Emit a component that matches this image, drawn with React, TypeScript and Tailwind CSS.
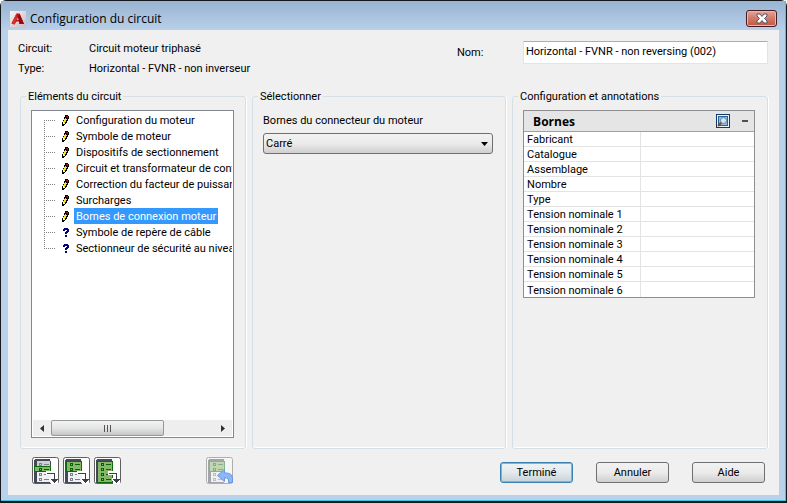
import React from "react";

const outline = "border-[#707070] rounded-[3px] bg-linear-to-b from-[#f2f2f2] from-0% via-[#ebebeb] via-50% to-[#cfcfcf]";

function Logo() {
  return (
    <svg width="16" height="16" viewBox="0 0 16 16" aria-hidden="true">
      <defs>
        <linearGradient id="logoBg" x1="0" y1="0" x2="1" y2="1">
          <stop offset="0" stopColor="#fbf3f3" />
          <stop offset="1" stopColor="#c9b9c0" />
        </linearGradient>
      </defs>
      <rect width="16" height="16" fill="url(#logoBg)" />
      <path d="M1.500 12.500 6.500 2.500H9.500L14 13h-4.500L9 10.500H6.500L4.500 13.500z" fill="#b3161b" />
      <path d="M1.500 12.500 6.500 2.500 7 8 4.500 13.500z" fill="#d3302f" />
      <path d="M8 6 9 9H7z" fill="#e9cfd2" />
      <path d="M9.500 2.500 14 13h-4.500L8 6z" fill="#94090f" />
    </svg>
  );
}

function Pencil() {
  return (
    <svg width="9" height="13" viewBox="0 0 9 13" shapeRendering="crispEdges" aria-hidden="true">
      <path d="M4 1h3v1h1v3H7v2H6v2H5v1H4v1H3v1H1V8h1V6h1V3h1z" fill="#000" />
      <path d="M4 4h1v1h1v1H5v2H4v1H3V8H2V7h1V5h1z" fill="#f2e21c" />
      <path d="M2 8h1v1h1v1H2z" fill="#fff" />
      <path d="M5 2h2v2H6V3H5z" fill="#a01418" />
    </svg>
  );
}

function Question() {
  return (
    <svg width="9" height="13" viewBox="0 0 9 13" shapeRendering="crispEdges" aria-hidden="true">
      <path d="M3 2h4v1h1v3H7v1H6v1H4V6h1V5h1V4H4v1H2V3h1zM4 9h2v2H4z" fill="#000080" />
    </svg>
  );
}

function Branch({ first, last }: { first: boolean; last: boolean }) {
  return (
    <svg className="shrink-0" width="12" height="16" viewBox="0 0 12 16" shapeRendering="crispEdges" aria-hidden="true">
      <path
        d={`M0 8.500h12${first ? "" : "M0.500 0v8"}${last ? "" : "M0.500 8v8"}`}
        fill="none"
        stroke="#808080"
        strokeDasharray="1 1"
      />
    </svg>
  );
}

function Lines({ y, color }: { y: number; color: string }) {
  return (
    <g>
      <rect x="7.500" y={y + 0.5} width="2" height="2" fill="none" stroke={color} />
      <rect x="12" y={y + 1} width="5" height="1" fill={color} />
    </g>
  );
}

function ListIcon({ from, to, undo = false }: { from: number; to: number; undo?: boolean }) {
  const rows = [6, 11, 16, 21];
  return (
    <svg width="27" height="27" viewBox="0 0 27 27" aria-hidden="true">
      <g opacity={undo ? 0.45 : 1}>
        <rect x="0.500" y="0.500" width="26" height="26" rx="2" fill="#fff" stroke="#5f5f5f" />
        <g shapeRendering="crispEdges">
          <rect x="2" y="2" width="17" height="24" fill="#f0f0f4" />
          <rect x="4" y="4" width="14" height="5" fill="#cdd0da" />
          <path d="M3 2h15v2H5v21h13v1H2V3h1z" fill="#454a56" />
          <rect x="18" y="4" width="1" height="12" fill="#454a56" />
          <rect x={from === 9 ? 2.5 : 3.5} y={from + 0.5} width={from === 9 ? 16 : 15} height={to - from - 1} fill="#86b767" stroke="#0b6b0b" />
          {rows.map((y) => (
            <Lines key={y} y={y} color={y >= from && y < to ? "#075f07" : "#7d808a"} />
          ))}
        </g>
      </g>
      {undo ? (
        <path d="M11.500 18.500 18.500 12.500V16H20Q26.500 16 26.500 22V25.500H22.500V23Q22.500 21 20.500 21H18.500V24.500z" fill="#8bb8f5" stroke="#6a97e0" />
      ) : (
        <g shapeRendering="crispEdges">
          <path d="M14 14h10v7h2v6h-7v-3h-1v-3h3v-3h-7z" fill="#fff" />
          <path d="M15 16h8v6h3v1h-1v1h-1v1h-1v1h-1v-1h-1v-1h-1v-1h-1v-1h3v-5h-7z" fill="#3a3f4a" />
        </g>
      )}
    </svg>
  );
}

function Magnifier() {
  return (
    <svg width="14" height="14" viewBox="0 0 14 14" aria-hidden="true">
      <rect x="0.500" y="0.500" width="13" height="13" fill="#e8f3fb" stroke="#123a66" />
      <rect x="2.500" y="2.500" width="9" height="9" fill="#8fb9dc" stroke="#2f6294" />
      <circle cx="7.500" cy="6.500" r="3" fill="#cde5f5" stroke="#5d8bb0" />
      <path d="M5.200 8.800 2 12" stroke="#7a4a20" strokeWidth="2" />
    </svg>
  );
}

const elements = [
  "Configuration du moteur",
  "Symbole de moteur",
  "Dispositifs de sectionnement",
  "Circuit et transformateur de contrôle",
  "Correction du facteur de puissance",
  "Surcharges",
  "Bornes de connexion moteur",
  "Symbole de repère de câble",
  "Sectionneur de sécurité au niveau",
];

const properties = [
  "Fabricant",
  "Catalogue",
  "Assemblage",
  "Nombre",
  "Type",
  "Tension nominale 1",
  "Tension nominale 2",
  "Tension nominale 3",
  "Tension nominale 4",
  "Tension nominale 5",
  "Tension nominale 6",
];

const tools = [
  { label: "Insérer l'élément", from: 9, to: 15 },
  { label: "Insérer jusqu'à l'élément", from: 4, to: 15 },
  { label: "Insérer tous les éléments", from: 4, to: 26 },
];

function Group({ title, className, children }: { title: string; className: string; children: React.ReactNode }) {
  return (
    <fieldset className={`flex min-w-0 flex-col rounded-[3px] border border-[#d5dfe5] pb-[10px] pl-[10px] shadow-[inset_0_-1px_0_#fff,1px_0_0_#fff] ${className}`}>
      <legend className="-ml-[5px] px-[2px] leading-[15px]">{title}</legend>
      {children}
    </fieldset>
  );
}

export default function App() {
  return (
    <div className="flex min-h-screen flex-col rounded-t-md border border-b-2 border-[#15181c] bg-[#b9d1ea] font-[Roboto,'Liberation_Sans',sans-serif] text-[11px] leading-[15px] text-black">
      <div className="flex flex-1 flex-col border-r border-b border-[#3fc6dc] bg-linear-to-b from-[#99b4d1] to-[#b9d1ea] to-[30px] pr-[6px] pb-[5px] pl-[7px]">
        <header className="flex h-[29px] items-center gap-[4px] px-[2px] pt-[6px]">
          <Logo />
          <h1 className="flex-1 font-['Open_Sans','Noto_Sans',sans-serif] text-[12px]">Configuration du circuit</h1>
          <button
            aria-label="Fermer"
            className="flex h-[17px] w-[31px] items-center justify-center rounded-[3px] border border-[#451a24] bg-linear-to-b from-[#e3a596] via-[#d07e6c] via-45% to-[#c35540] shadow-[inset_0_0_0_1px_#e9b9ad]"
          >
            <svg width="12" height="11" viewBox="0 0 12 11" aria-hidden="true">
              <path d="M1 1h3l2 2.500L8 1h3v2L8.500 5.500 11 8v2H8L6 7.500 4 10H1V8l2.500-2.500L1 3z" fill="#fff" stroke="#535666" />
            </svg>
          </button>
        </header>

        <main className="flex flex-1 flex-col bg-[#f0f0f0] pr-[11px] pl-[12px]">
          <div className="flex h-[59px] justify-between pt-[8px]">
            <dl className="-ml-[2px] grid grid-cols-[71px_auto] content-start gap-y-[5px] pt-[3px]">
              <dt>Circuit:</dt>
              <dd>Circuit moteur triphasé</dd>
              <dt>Type:</dt>
              <dd>Horizontal - FVNR - non inverseur</dd>
            </dl>
            <div className="flex items-start">
              <label htmlFor="name" className="w-[66px] pt-[7px]">Nom:</label>
              <input
                id="name"
                defaultValue="Horizontal - FVNR - non reversing (002)"
                className="mt-[3px] h-[23px] w-[245px] border border-[#e2e3ea] border-t-[#abadb3] bg-white px-[2px] pb-[3px]"
              />
            </div>
          </div>

          <div className="flex flex-1 gap-[6px]">
            <Group title="Eléments du circuit" className="w-[226px] pr-[11px]">
              <div className="mt-[6px] flex min-h-[328px] flex-1 flex-col border border-[#828790] bg-white p-px">
                <ul className="flex-1 overflow-hidden">
                  {elements.map((name, i) => (
                    <li key={name} className="flex h-[16px] items-center pl-[11px] whitespace-nowrap">
                      <Branch first={i === 0} last={i === elements.length - 1} />
                      <span className="mr-[4px] ml-[5px] shrink-0">{i < 7 ? <Pencil /> : <Question />}</span>
                      <button className={`h-[16px] px-[2px] ${i === 6 ? "bg-[#3399ff] text-white" : ""}`}>{name}</button>
                    </li>
                  ))}
                </ul>
                <div className="flex h-[16px] items-stretch bg-[#eeeeee]">
                  <button aria-label="Défiler à gauche" className="flex w-[18px] items-center justify-center">
                    <svg width="4" height="7" viewBox="0 0 4 7" aria-hidden="true"><path d="M4 0v7L0 3.500z" fill="#303030" /></svg>
                  </button>
                  <div className="flex w-[113px] items-center justify-center gap-[2px] rounded-[2px] border border-[#979797] bg-linear-to-b from-[#f3f3f3] via-[#e4e5e6] via-50% to-[#c6c7c9]">
                    <span className="h-[7px] w-px bg-[#555]" />
                    <span className="h-[7px] w-px bg-[#555]" />
                    <span className="h-[7px] w-px bg-[#555]" />
                  </div>
                  <div className="flex-1" />
                  <button aria-label="Défiler à droite" className="flex w-[18px] items-center justify-center">
                    <svg width="4" height="7" viewBox="0 0 4 7" aria-hidden="true"><path d="M0 0v7L4 3.500z" fill="#303030" /></svg>
                  </button>
                </div>
              </div>
            </Group>

            <Group title="Sélectionner" className="grow-[254] basis-0 pr-[12px]">
              <label htmlFor="terminals" className="mt-[9px]">Bornes du connecteur du moteur</label>
              <div className="relative mt-[5px]">
                <select id="terminals" className={`h-[21px] w-full appearance-none border pl-[2px] ${outline}`}>
                  <option>Carré</option>
                </select>
                <svg className="pointer-events-none absolute top-[9px] right-[5px]" width="7" height="4" viewBox="0 0 7 4" aria-hidden="true">
                  <path d="M0 0h7L3.500 4z" fill="#000" />
                </svg>
              </div>
            </Group>

            <Group title="Configuration et annotations" className="grow-[256] basis-0 pr-[12px]">
              <section className="mt-[6px] border border-[#8f8f8f] bg-white">
                <div className="flex h-[21px] items-center border-b border-[#a0a0a0] bg-[#e5e5e5] pr-[6px] pl-[9px]">
                  <h2 className="flex-1 font-['Open_Sans','Noto_Sans',sans-serif] text-[12px] font-bold">Bornes</h2>
                  <button aria-label="Rechercher" className="mr-[12px]"><Magnifier /></button>
                  <button aria-label="Réduire" className="flex h-[14px] w-[6px] items-center"><span className="h-[2px] w-full bg-[#505050]" /></button>
                </div>
                <table className="w-full table-fixed border-separate border-spacing-0">
                  <tbody>
                    {properties.map((name) => (
                      <tr key={name} className="group h-[15px]">
                        <th scope="row" className="w-[117px] border-r border-b border-[#e3e3e3] pt-px pb-0 pl-[3px] text-left leading-[13px] font-normal group-last:border-b-0">{name}</th>
                        <td className="border-b border-[#e3e3e3] p-0 group-last:border-b-0" />
                      </tr>
                    ))}
                  </tbody>
                </table>
              </section>
            </Group>
          </div>

          <footer className="flex h-[46px] items-start justify-between pt-[8px] pr-[3px] pl-[12px]">
            <div className="flex gap-[4px]">
              {tools.map((tool) => (
                <button key={tool.label} aria-label={tool.label}><ListIcon from={tool.from} to={tool.to} /></button>
              ))}
              <button aria-label="Rétablir" disabled className="ml-[81px]"><ListIcon from={4} to={15} undo /></button>
            </div>
            <div className="flex gap-[23px] pt-[5px]">
              <button className="h-[21px] w-[73px] rounded-[3px] border border-[#3c7fb1] bg-linear-to-b from-[#eef3f6] via-[#e3e9ec] via-50% to-[#c6d2d8] shadow-[inset_0_0_0_1px_#45cdf0]">Terminé</button>
              <button className={`h-[21px] w-[73px] border ${outline}`}>Annuler</button>
              <button className={`h-[21px] w-[73px] border ${outline}`}>Aide</button>
            </div>
          </footer>
        </main>
      </div>
    </div>
  );
}
